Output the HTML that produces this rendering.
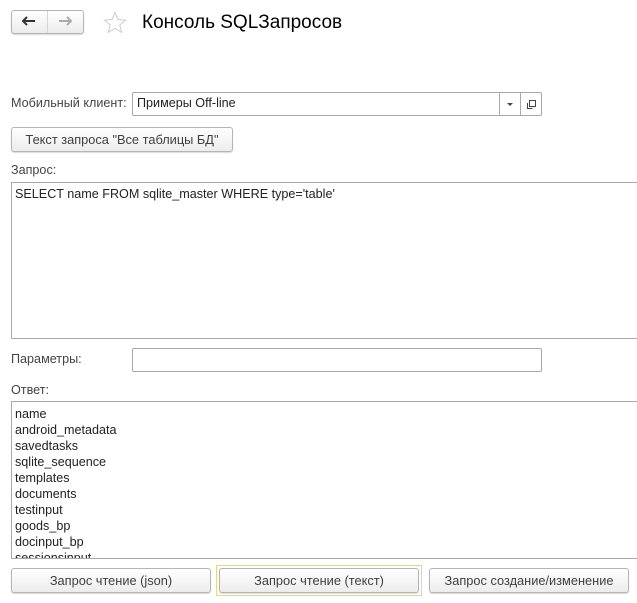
<!DOCTYPE html><html><head><style>
body{margin:0;width:637px;height:603px;background:#fff;font-family:"Liberation Sans",Arial,sans-serif;font-size:12.6px;color:#333;position:relative;overflow:hidden}
.a{position:absolute}
.btn{position:absolute;border:1px solid #b5b5b5;border-radius:3px;background:linear-gradient(#fff,#ececec);box-shadow:0 1px 1px rgba(0,0,0,.15);text-align:center;box-sizing:border-box;color:#404040;font-size:12.8px}
.box{position:absolute;border:1px solid #a8a8a8;border-right:none;box-sizing:border-box;background:#fff}
</style></head><body>
<div class="btn" style="left:11px;top:10px;width:73px;height:24px"></div>
<div class="a" style="left:47px;top:11px;width:1px;height:22px;background:#d5d5d5"></div>
<svg class="a" style="left:22px;top:16px" width="14" height="10"><path d="M1 5h12M5 1L1 5l4 4" fill="none" stroke="#333" stroke-width="2"/></svg>
<svg class="a" style="left:58px;top:16px" width="14" height="10"><path d="M1 5h12M9 1l4 4-4 4" fill="none" stroke="#aaa" stroke-width="2"/></svg>
<svg class="a" style="left:103px;top:11px" width="24" height="24" viewBox="0 0 24 24"><path d="M12 1.5l3 7 7.5.6-5.7 4.9 1.8 7.3L12 17.4l-6.6 3.9 1.8-7.3L1.5 9.1 9 8.5z" fill="none" stroke="#ccc" stroke-width="1"/></svg>
<div class="a" style="left:142px;top:12px;font-size:19px;color:#000">Консоль SQLЗапросов</div>
<div class="a" style="left:11px;top:96px;color:#444">Мобильный клиент:</div>
<div class="a" style="left:132px;top:92px;width:410px;height:24px;border:1px solid #a8a8a8;border-radius:2px;box-sizing:border-box"></div>
<div class="a" style="left:137px;top:96px;color:#222">Примеры Off-line</div>
<div class="a" style="left:499px;top:93px;width:1px;height:22px;background:#a8a8a8"></div>
<div class="a" style="left:520px;top:93px;width:1px;height:22px;background:#a8a8a8"></div>
<div class="a" style="left:507px;top:103px;width:0;height:0;border-left:3px solid transparent;border-right:3px solid transparent;border-top:3px solid #444"></div>
<svg class="a" style="left:526px;top:99px" width="11" height="11"><path d="M3.5 1.5h6v6h-6z M1.5 4v5.5h5" fill="none" stroke="#444"/></svg>
<div class="btn" style="left:11px;top:127px;width:222px;height:25px;line-height:23px">Текст запроса "Все таблицы БД"</div>
<div class="a" style="left:11px;top:163px;color:#444">Запрос:</div>
<div class="box" style="left:11px;top:182px;width:626px;height:157px"></div>
<div class="a" style="left:15px;top:187px;color:#222">SELECT name FROM sqlite_master WHERE type='table'</div>
<div class="a" style="left:11px;top:352px;color:#444">Параметры:</div>
<div class="a" style="left:132px;top:348px;width:410px;height:24px;border:1px solid #a8a8a8;border-radius:2px;box-sizing:border-box"></div>
<div class="a" style="left:11px;top:383px;color:#444">Ответ:</div>
<div class="box" style="left:11px;top:401px;width:626px;height:158px;overflow:hidden">
<div style="padding:4px 0 0 3px;line-height:16px;color:#222">name<br>android_metadata<br>savedtasks<br>sqlite_sequence<br>templates<br>documents<br>testinput<br>goods_bp<br>docinput_bp<br>sessionsinput</div></div>
<div class="btn" style="left:11px;top:568px;width:200px;height:25px;line-height:23px">Запрос чтение (json)</div>
<div class="a" style="left:216px;top:565px;width:206px;height:31px;border:1px solid #e5d78a;box-sizing:border-box"></div>
<div class="btn" style="left:219px;top:568px;width:200px;height:25px;line-height:23px">Запрос чтение (текст)</div>
<div class="btn" style="left:429px;top:568px;width:200px;height:25px;line-height:23px">Запрос создание/изменение</div>
</body></html>
